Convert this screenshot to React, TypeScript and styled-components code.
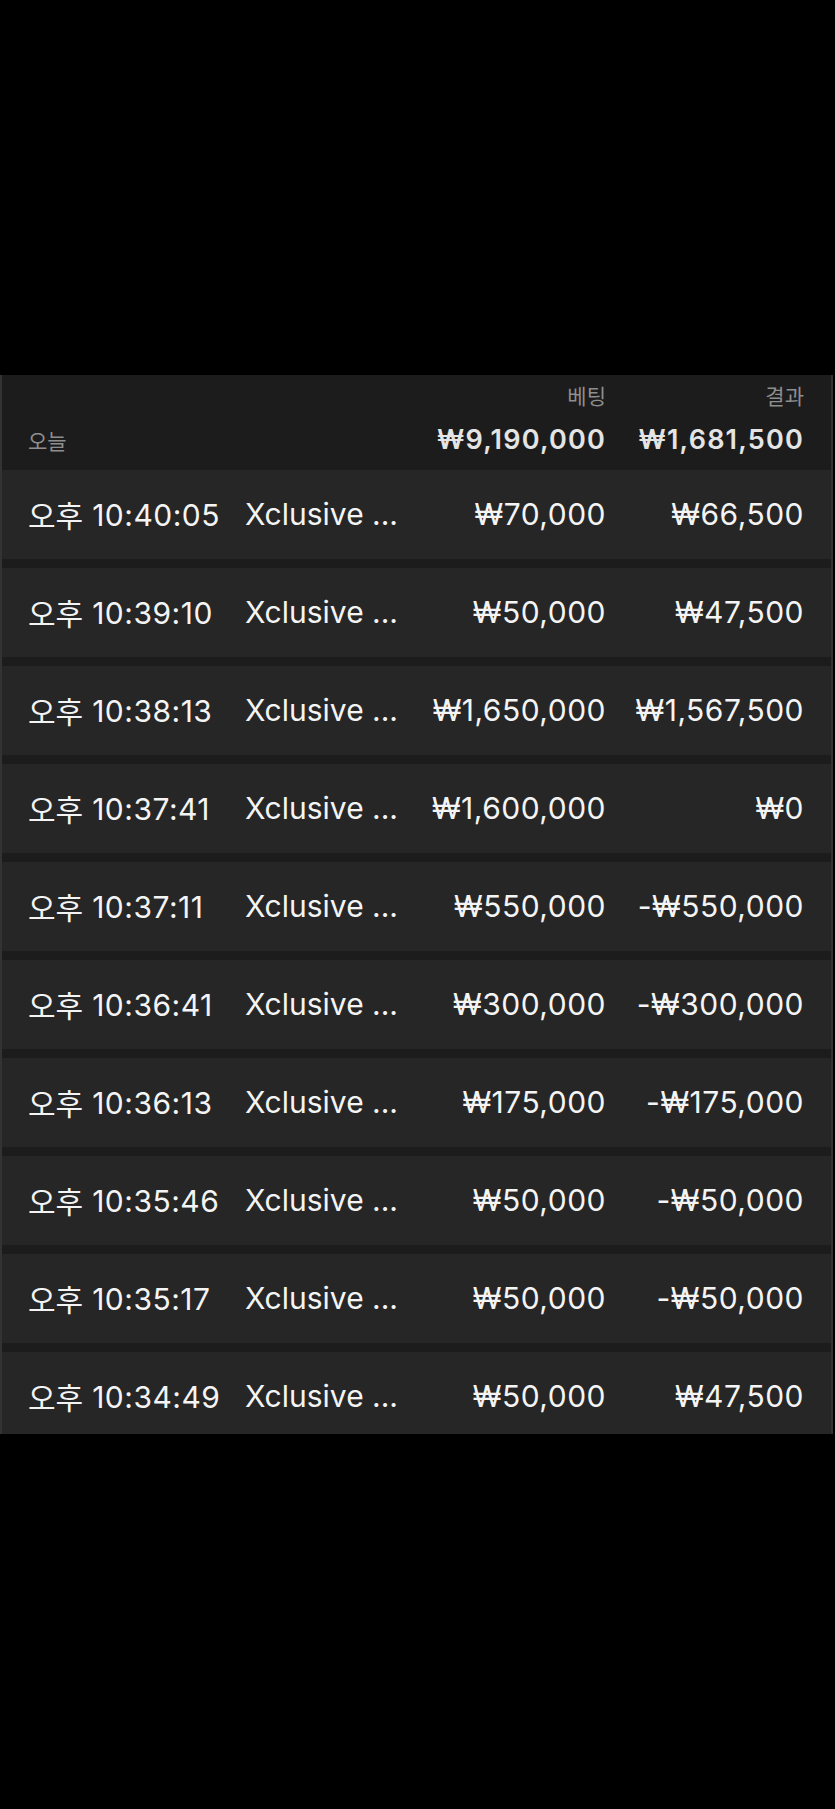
import React from "react";
import styled, { createGlobalStyle } from "styled-components";

const GlobalStyle = createGlobalStyle`
  html, body {
    margin: 0;
    padding: 0;
    background: #000;
  }
  body {
    font-family: Inter, "Noto Sans CJK KR", "Noto Sans", sans-serif;
    -webkit-font-smoothing: antialiased;
  }
`;

const Page = styled.div`
  padding-top: 375px;
  width: 835px;
  height: 1809px;
  box-sizing: border-box;
  background: #000;
`;

const Panel = styled.section`
  width: 833px;
  height: 1059px;
  box-sizing: border-box;
  overflow: hidden;
  background: #1c1c1c;
  border-left: 2px solid #333333;
  border-right: 2px solid #333333;
`;

const COLS = "217px 1fr 200px 198px";

const Header = styled.div`
  display: grid;
  grid-template-columns: ${COLS};
  grid-template-rows: auto auto;
  align-items: baseline;
  height: 95px;
  box-sizing: border-box;
  padding: 8px 27px 0 26px;
  background: #1c1c1c;
`;

const HeaderLabel = styled.div<{ $col: number }>`
  grid-column: ${(p) => p.$col};
  grid-row: 1;
  justify-self: end;
  font-size: 21px;
  line-height: 28px;
  color: #8e8e8e;
`;

const TodayLabel = styled.div`
  grid-column: 1;
  grid-row: 2;
  font-size: 21px;
  line-height: 40px;
  color: #8e8e8e;
`;

const Total = styled.div<{ $col: number }>`
  grid-column: ${(p) => p.$col};
  grid-row: 2;
  justify-self: end;
  font-size: 27px;
  line-height: 40px;
  font-weight: 600;
  color: #e4e4e4;
  letter-spacing: 1.2px;
`;

const List = styled.div`
  display: flex;
  flex-direction: column;
  gap: 9px;
`;

const Row = styled.div`
  display: grid;
  grid-template-columns: ${COLS};
  align-items: center;
  flex: 0 0 89px;
  height: 89px;
  box-sizing: border-box;
  padding: 0 27px 2px 26px;
  background: #262626;
  color: #f4f4f4;
  font-size: 30px;
  letter-spacing: 0.5px;
`;

const Cell = styled.div<{ $align?: "left" | "right"; $tight?: boolean }>`
  white-space: nowrap;
  text-align: ${(p) => p.$align ?? "left"};
  letter-spacing: ${(p) => (p.$tight ? "0" : "inherit")};
`;

const Meridiem = styled.span`
  letter-spacing: 0;
  vertical-align: -1px;
`;

type Bet = { meridiem: string; time: string; game: string; bet: string; result: string };

const bets: Bet[] = [
  { meridiem: "오후", time: "10:40:05", game: "Xclusive ...", bet: "₩70,000", result: "₩66,500" },
  { meridiem: "오후", time: "10:39:10", game: "Xclusive ...", bet: "₩50,000", result: "₩47,500" },
  { meridiem: "오후", time: "10:38:13", game: "Xclusive ...", bet: "₩1,650,000", result: "₩1,567,500" },
  { meridiem: "오후", time: "10:37:41", game: "Xclusive ...", bet: "₩1,600,000", result: "₩0" },
  { meridiem: "오후", time: "10:37:11", game: "Xclusive ...", bet: "₩550,000", result: "-₩550,000" },
  { meridiem: "오후", time: "10:36:41", game: "Xclusive ...", bet: "₩300,000", result: "-₩300,000" },
  { meridiem: "오후", time: "10:36:13", game: "Xclusive ...", bet: "₩175,000", result: "-₩175,000" },
  { meridiem: "오후", time: "10:35:46", game: "Xclusive ...", bet: "₩50,000", result: "-₩50,000" },
  { meridiem: "오후", time: "10:35:17", game: "Xclusive ...", bet: "₩50,000", result: "-₩50,000" },
  { meridiem: "오후", time: "10:34:49", game: "Xclusive ...", bet: "₩50,000", result: "₩47,500" },
];

export default function App() {
  return (
    <>
      <GlobalStyle />
      <Page>
        <Panel>
          <Header>
            <HeaderLabel $col={3}>베팅</HeaderLabel>
            <HeaderLabel $col={4}>결과</HeaderLabel>
            <TodayLabel>오늘</TodayLabel>
            <Total $col={3}>₩9,190,000</Total>
            <Total $col={4}>₩1,681,500</Total>
          </Header>
          <List>
            {bets.map((b, i) => (
              <Row key={i}>
                <Cell>
                  <Meridiem>{b.meridiem}</Meridiem> {b.time}
                </Cell>
                <Cell $tight>{b.game}</Cell>
                <Cell $align="right">{b.bet}</Cell>
                <Cell $align="right">{b.result}</Cell>
              </Row>
            ))}
          </List>
        </Panel>
      </Page>
    </>
  );
}
